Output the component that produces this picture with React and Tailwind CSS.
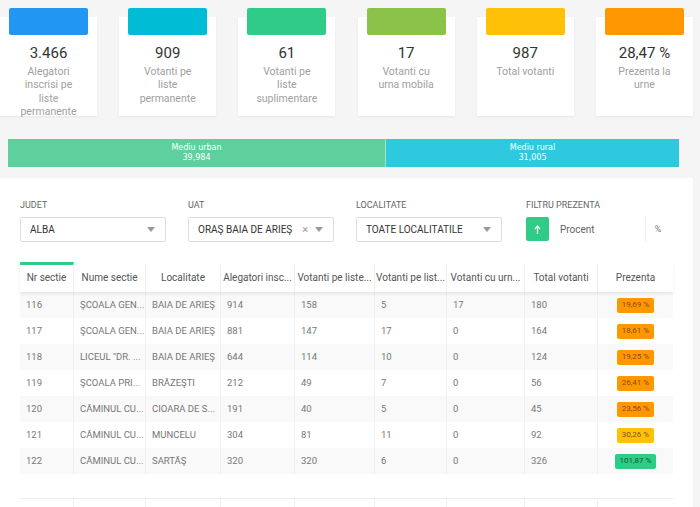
import React from "react";

const stats = [
  { color: "bg-[#2196f3]", value: "3.466", label: ["Alegatori", "inscrisi pe", "liste", "permanente"] },
  { color: "bg-[#00bcd4]", value: "909", label: ["Votanti pe", "liste", "permanente"] },
  { color: "bg-[#2ecc87]", value: "61", label: ["Votanti pe", "liste", "suplimentare"] },
  { color: "bg-[#8bc34a]", value: "17", label: ["Votanti cu", "urna mobila"] },
  { color: "bg-[#ffc107]", value: "987", label: ["Total votanti"] },
  { color: "bg-[#ff9800]", value: "28,47 %", label: ["Prezenta la", "urne"] },
];

const cols = [
  { name: "Nr sectie", w: "w-[54px]" },
  { name: "Nume sectie", w: "w-[72px]" },
  { name: "Localitate", w: "w-[75px]" },
  { name: "Alegatori insc...", w: "w-[74px]" },
  { name: "Votanti pe liste...", w: "w-[80px]" },
  { name: "Votanti pe list...", w: "w-[72px]" },
  { name: "Votanti cu urn...", w: "w-[78px]" },
  { name: "Total votanti", w: "w-[73px]" },
  { name: "Prezenta", w: "w-[75px]" },
];

const rows = [
  ["116", "ŞCOALA GEN...", "BAIA DE ARIEŞ", "914", "158", "5", "17", "180", "19,69 %", "orange"],
  ["117", "ŞCOALA GEN...", "BAIA DE ARIEŞ", "881", "147", "17", "0", "164", "18,61 %", "orange"],
  ["118", "LICEUL \"DR. ...", "BAIA DE ARIEŞ", "644", "114", "10", "0", "124", "19,25 %", "orange"],
  ["119", "ŞCOALA PRI...", "BRĂZEŞTI", "212", "49", "7", "0", "56", "26,41 %", "orange"],
  ["120", "CĂMINUL CU...", "CIOARA DE S...", "191", "40", "5", "0", "45", "23,56 %", "orange"],
  ["121", "CĂMINUL CU...", "MUNCELU", "304", "81", "11", "0", "92", "30,26 %", "yellow"],
  ["122", "CĂMINUL CU...", "SARTĂŞ", "320", "320", "6", "0", "326", "101,87 %", "green"],
];

const badge = {
  orange: "bg-[#ff9800] text-[#8a4b00]",
  yellow: "bg-[#ffc107] text-[#7a5a00]",
  green: "bg-[#2ecc87] text-[#0d5a36]",
};

function Caret() {
  return (
    <svg width="8" height="5" viewBox="0 0 8 5" className="shrink-0">
      <path d="M0 0h8L4 5z" fill="#999" />
    </svg>
  );
}

function Select({ label, value, clear }) {
  return (
    <div className="w-[146px]">
      <div className="text-[9px] text-[#666] uppercase leading-[12px] h-[12px]">{label}</div>
      <div className="mt-[6px] h-[25px] border border-[#ddd] rounded-[2px] bg-white flex items-center pl-[9px] pr-[10px]">
        <span className="flex-1 text-[10px] text-[#333] truncate">{value}</span>
        {clear && <span className="text-[11px] text-[#999] mr-[7px] leading-none">×</span>}
        <Caret />
      </div>
    </div>
  );
}

export default function App() {
  return (
    <div className="w-[700px] h-[507px] overflow-hidden bg-[#f5f5f5] font-['Roboto',sans-serif]">
      {/* stat cards */}
      <div className="w-[693px] flex justify-between">
        {stats.map((s) => (
          <div key={s.value} className="w-[97px] mt-[17px] h-[99px] bg-white shadow-[0_1px_2px_rgba(0,0,0,0.06)] flex flex-col items-center">
            <div className={`-mt-[9px] shrink-0 w-[79px] h-[27px] rounded-[2px] ${s.color}`} />
            <div className="mt-[9px] shrink-0 text-[15px] leading-[18px] text-[#333]">{s.value}</div>
            <div className="mt-[3px] shrink-0 text-center text-[10.5px] leading-[13.4px] text-[#a0a0a0]">
              {s.label.map((l) => (
                <div key={l}>{l}</div>
              ))}
            </div>
          </div>
        ))}
      </div>

      {/* urban / rural bar */}
      <div className="mt-[23px] ml-[8px] w-[671px] h-[28px] flex text-white text-[8px] leading-[10px] font-['DejaVu_Sans',sans-serif]">
        <div className="w-[378px] bg-[#5dd09e] flex flex-col items-center justify-center border-r border-[#9ee6c4]">
          <span>Mediu urban</span>
          <span>39,984</span>
        </div>
        <div className="flex-1 bg-[#2ec8df] flex flex-col items-center justify-center">
          <span>Mediu rural</span>
          <span>31,005</span>
        </div>
      </div>

      {/* main panel */}
      <div className="mt-[11px] w-[693px] h-[400px] bg-white pt-[21px] pl-[20px]">
        <div className="flex gap-[22px]">
          <Select label="Judet" value="ALBA" />
          <Select label="UAT" value="ORAŞ BAIA DE ARIEŞ" clear />
          <Select label="Localitate" value="TOATE LOCALITATILE" />
          <div className="w-[146px]">
            <div className="text-[9px] text-[#666] uppercase leading-[12px] h-[12px] pl-[2px]">Filtru prezenta</div>
            <div className="mt-[6px] h-[25px] flex pl-[2px]">
              <div className="w-[23px] h-[24px] bg-[#2ecc87] rounded-[2px] flex items-center justify-center">
                <svg width="7" height="9" viewBox="0 0 7 9">
                  <path d="M3.5 9V1.5M1 4l2.5-3 2.5 3" stroke="#fff" strokeWidth="1.2" fill="none" />
                </svg>
              </div>
              <div className="flex-1 pl-[11px] flex items-center text-[10px] text-[#666]">Procent</div>
              <div className="w-[25px] border-l border-[#f0f0f0] flex items-center justify-center text-[9px] text-[#777]">%</div>
            </div>
          </div>
        </div>

        {/* table */}
        <div className="mt-[20px] w-[653px]">
          <div className="flex h-[30px] bg-white shadow-[0_2px_3px_rgba(0,0,0,0.08)] relative">
            {cols.map((c, i) => (
              <div
                key={c.name}
                className={`${c.w} flex items-center justify-center pb-[3px] px-[3px] text-[10px] text-[#555] whitespace-nowrap overflow-hidden ${i < 8 ? "border-r border-[#eee]" : ""} ${i === 0 ? "border-t-[3px] border-t-[#2ecc87]" : "border-t-[3px] border-t-transparent"}`}
              >
                {c.name}
              </div>
            ))}
          </div>
          {rows.map((r, ri) => (
            <div key={r[0]} className={`flex h-[26px] ${ri % 2 === 0 ? "bg-[#f9f9f9]" : "bg-white"}`}>
              {cols.map((c, i) => (
                <div
                  key={c.name}
                  className={`${c.w} flex items-center ${i === 8 ? "justify-center" : "pl-[6px]"} text-[9.5px] text-[#777] whitespace-nowrap overflow-hidden ${i < 8 ? "border-r border-[#f0f0f0]" : ""}`}
                >
                  {i === 8 ? (
                    <span className={`px-[5px] h-[15px] flex items-center rounded-[2px] text-[8px] ${badge[r[9]]}`}>{r[8]}</span>
                  ) : (
                    r[i]
                  )}
                </div>
              ))}
            </div>
          ))}
          <div className="h-[25px] border-b border-[#eee]" />
          <div className="flex h-[20px]">
            {cols.map((c, i) => (
              <div key={c.name} className={`${c.w} ${i < 8 ? "border-r border-[#f0f0f0]" : ""}`} />
            ))}
          </div>
        </div>
      </div>
    </div>
  );
}
